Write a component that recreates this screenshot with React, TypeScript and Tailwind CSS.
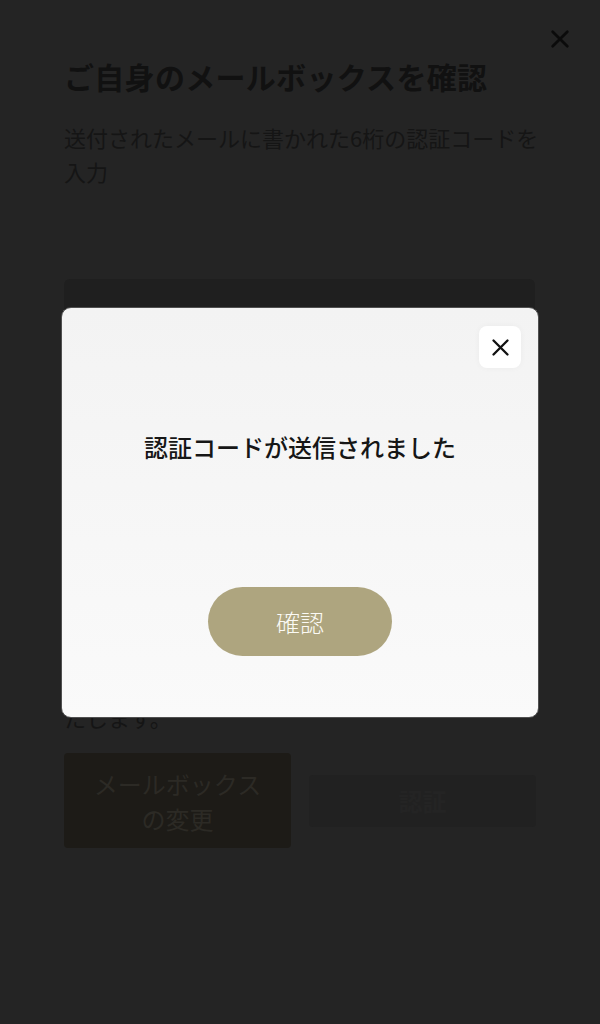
import React from "react";

const XIcon = ({ size, color, stroke }: { size: number; color: string; stroke: number }) => (
  <svg width={size} height={size} viewBox="0 0 24 24" fill="none" stroke={color} strokeWidth={stroke} strokeLinecap="round">
    <path d="M4 4L20 20M20 4L4 20" />
  </svg>
);

export default function App() {
  return (
    <div
      className="relative w-[600px] h-[1024px] overflow-hidden bg-[#242424]"
      style={{ fontFamily: '"Noto Sans CJK JP", "Noto Sans", sans-serif' }}
    >
      {/* Underlying page (dimmed) */}
      <div className="flex flex-col px-[64px]">
        <div className="flex justify-end pt-[28px] mr-[-35px]">
          <XIcon size={22} color="#0b0b0b" stroke={3} />
        </div>
        <h1 className="mt-[6px] text-[30px] leading-[40px] font-bold text-[#111111] tracking-[0.01em]">
          ご自身のメールボックスを確認
        </h1>
        <p className="mt-[24px] mr-[-16px] text-[22px] leading-[34px] text-[#151515]">
          送付されたメールに書かれた6桁の認証コードを入力
        </p>
        <div className="mt-[91px] h-[56px] w-[471px] rounded-[6px] bg-[#1f1f1f]" />
        <p className="mt-[365px] text-[22px] leading-[34px] text-[#151515]">
          たします。
        </p>
        <div className="mt-[19px] flex items-center gap-[18px]">
          <div className="w-[227px] h-[95px] rounded-[4px] bg-[#1d1b17] flex items-center justify-center text-center text-[24px] leading-[35px] text-[#2c2a25]">
            メールボックス
            <br />
            の変更
          </div>
          <div className="w-[227px] h-[52px] rounded-[4px] bg-[#212121] flex items-center justify-center text-[24px] font-bold text-[#242424]">
            認証
          </div>
        </div>
      </div>

      {/* Modal */}
      <div className="absolute left-[61px] top-[307px] w-[478px] h-[411px] rounded-[10px] border border-[#505050] bg-gradient-to-b from-[#f3f3f3] to-[#fafafa] flex flex-col items-center">
        <div className="absolute right-[17px] top-[18px] w-[42px] h-[42px] rounded-[8px] bg-white flex items-center justify-center shadow-[0_0_6px_rgba(0,0,0,0.04)]">
          <XIcon size={21} color="#111111" stroke={2.7} />
        </div>
        <p className="mt-[122px] text-[24px] leading-[34px] font-medium text-[#161616]">
          認証コードが送信されました
        </p>
        <button className="mt-[123px] w-[184px] h-[69px] rounded-full bg-[#aea57f] text-[#fbfaf5] text-[24px] font-light flex items-center justify-center">
          確認
        </button>
      </div>
    </div>
  );
}
